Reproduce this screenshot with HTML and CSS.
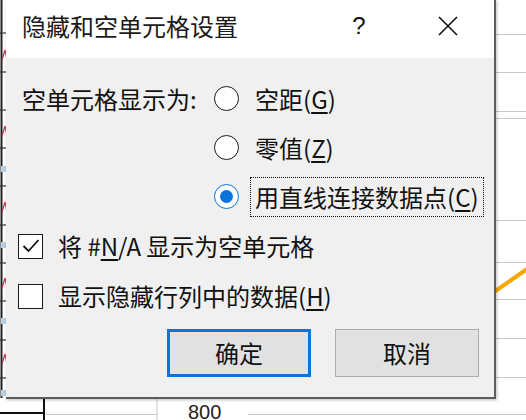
FILE: index.html
```html
<!DOCTYPE html>
<html lang="zh-CN">
<head>
<meta charset="utf-8">
<title>隐藏和空单元格设置</title>
<link rel="stylesheet" href="styles.css">
</head>
<body>
<div class="screen">
  <svg class="sheet" width="526" height="420" viewBox="0 0 526 420">
    <line x1="1.5" y1="0" x2="1.5" y2="398" stroke="#222" stroke-width="2"/>
    <g stroke="#333" stroke-width="1.2">
      <line x1="0" y1="33" x2="7" y2="33"/>
      <line x1="0" y1="72" x2="7" y2="72"/>
      <line x1="0" y1="110" x2="7" y2="110"/>
      <line x1="0" y1="148" x2="7" y2="148"/>
      <line x1="0" y1="186" x2="7" y2="186"/>
      <line x1="0" y1="225" x2="7" y2="225"/>
      <line x1="0" y1="263" x2="7" y2="263"/>
      <line x1="0" y1="301" x2="7" y2="301"/>
      <line x1="0" y1="340" x2="7" y2="340"/>
      <line x1="0" y1="378" x2="7" y2="378"/>
    </g>
    <g fill="none" stroke="#c0304a" stroke-width="1.2">
      <path d="M2 60 L5 50 L7 60"/>
      <path d="M2 136 L5 126 L7 136"/>
      <path d="M2 212 L5 202 L7 212"/>
      <path d="M2 288 L5 278 L7 288"/>
      <path d="M2 364 L5 354 L7 364"/>
    </g>
    <g fill="#b8cfe0">
      <rect x="1" y="166" width="5" height="6"/>
      <rect x="1" y="242" width="5" height="6"/>
      <rect x="1" y="318" width="5" height="6"/>
      <rect x="1" y="390" width="5" height="6"/>
    </g>
    <line x1="0" y1="413" x2="45" y2="413" stroke="#111" stroke-width="2"/>
    <line x1="44" y1="398" x2="44" y2="420" stroke="#111" stroke-width="2"/>
    <line x1="157" y1="398" x2="157" y2="420" stroke="#c8c8c8" stroke-width="1"/>
    <line x1="46" y1="414.5" x2="157" y2="414.5" stroke="#c8c8c8" stroke-width="1"/>
    <line x1="248" y1="414.5" x2="526" y2="414.5" stroke="#c8c8c8" stroke-width="1"/>
    <g stroke="#c8c8c8" stroke-width="1">
      <line x1="496" y1="34.5" x2="526" y2="34.5"/>
      <line x1="496" y1="72.5" x2="526" y2="72.5"/>
      <line x1="496" y1="111.5" x2="526" y2="111.5"/>
      <line x1="496" y1="118.5" x2="526" y2="118.5"/>
      <line x1="496" y1="220.5" x2="526" y2="220.5"/>
      <line x1="496" y1="262.5" x2="526" y2="262.5"/>
      <line x1="496" y1="299.5" x2="526" y2="299.5"/>
      <line x1="496" y1="338.5" x2="526" y2="338.5"/>
      <line x1="496" y1="377.5" x2="526" y2="377.5"/>
    </g>
    <line x1="494" y1="292" x2="527" y2="269" stroke="#f7a800" stroke-width="4"/>
  </svg>
  <div class="cell-800">800</div>

  <div class="dialog">
    <div class="titlebar">
      <span class="title">隐藏和空单元格设置</span>
      <span class="help">?</span>
      <span class="close">
        <svg width="20" height="20" viewBox="0 0 20 20"><path d="M1 1 L19 19 M19 1 L1 19" stroke="#111" stroke-width="1.6" fill="none"/></svg>
      </span>
    </div>
    <div class="body">
      <div class="group">
        <div class="group-label">空单元格显示为:</div>
        <div class="options">
          <div class="option"><span class="radio"></span><span class="opt-text">空距(<u>G</u>)</span></div>
          <div class="option"><span class="radio"></span><span class="opt-text">零值(<u>Z</u>)</span></div>
          <div class="option"><span class="radio checked"></span><span class="opt-text focused">用直线连接数据点(<u>C</u>)</span></div>
        </div>
      </div>
      <div class="check-row">
        <span class="checkbox"><svg width="22" height="22" viewBox="0 0 22 22"><path d="M3.5 11 L8.5 16 L18.5 5" stroke="#111" stroke-width="1.8" fill="none"/></svg></span>
        <span class="check-text">将 #<u>N</u>/A 显示为空单元格</span>
      </div>
      <div class="check-row">
        <span class="checkbox"></span>
        <span class="check-text">显示隐藏行列中的数据(<u>H</u>)</span>
      </div>
      <div class="buttons">
        <button class="btn btn-default">确定</button>
        <button class="btn">取消</button>
      </div>
    </div>
  </div>
</div>
</body>
</html>
```

FILE: styles.css
```css
* { box-sizing: border-box; }
html, body { margin: 0; padding: 0; background: #fff; }
body { font-family: "Noto Sans CJK SC", "Noto Sans", sans-serif; color: #111; }

.screen {
  position: relative;
  width: 526px;
  height: 420px;
  overflow: hidden;
  background: #fff;
}
.sheet { position: absolute; left: 0; top: 0; }
.cell-800 {
  position: absolute;
  left: 188px;
  top: 402px;
  font-family: "Liberation Sans", sans-serif;
  font-size: 20px;
  line-height: 20px;
  color: #222;
}

.dialog {
  position: absolute;
  left: 6px;
  top: 0;
  width: 490px;
  height: 399px;
  display: flex;
  flex-direction: column;
  background: #f0f0f0;
  border-right: 2px solid #5c5c5c;
  border-bottom: 2px solid #5c5c5c;
  box-shadow: 1px 1px 3px rgba(0,0,0,0.25);
}

.titlebar {
  height: 58px;
  flex: none;
  background: #fff;
  display: flex;
  align-items: center;
  padding: 0 26px 6px 16px;
}
.title { flex: 1; font-size: 24px; line-height: 30px; color: #1a1a1a; }
.help { width: 34px; text-align: center; font-size: 24px; line-height: 30px; font-family: "Liberation Sans", sans-serif; }
.close { width: 40px; margin-left: 52px; display: flex; justify-content: center; align-items: center; height: 30px; }

.body {
  flex: 1;
  display: flex;
  flex-direction: column;
  padding: 16px 15px 0 12px;
  font-size: 24px;
  white-space: nowrap;
}

.group { display: flex; }
.group-label { width: 196px; flex: none; padding-left: 4px; line-height: 49px; height: 49px; }
.options { display: flex; flex-direction: column; flex: 1; }
.option { height: 49px; display: flex; align-items: center; }

.radio {
  width: 25px;
  height: 25px;
  border: 1.6px solid #1a1a1a;
  border-radius: 50%;
  background: #fff;
  margin-right: 11px;
  display: flex;
  align-items: center;
  justify-content: center;
  flex: none;
}
.radio.checked { border-color: #0a74da; }
.radio.checked::after {
  content: "";
  width: 13px;
  height: 13px;
  border-radius: 50%;
  background: #0a74da;
}

.opt-text {
  border: 1px dotted transparent;
  padding: 0 4px;
  line-height: 38px;
  height: 40px;
}
.opt-text.focused { border-color: #111; }

u { text-decoration: underline; text-decoration-thickness: 1.5px; text-underline-offset: 3px; }

.check-row { height: 50px; display: flex; align-items: center; }
.checkbox {
  width: 25px;
  height: 25px;
  border: 1.6px solid #1a1a1a;
  background: #fff;
  margin-right: 15px;
  display: flex;
  align-items: center;
  justify-content: center;
  flex: none;
}
.check-text { line-height: 30px; }

.buttons {
  margin-top: 8px;
  display: flex;
  justify-content: flex-end;
  gap: 24px;
}
.btn {
  width: 144px;
  height: 48px;
  background: #e1e1e1;
  border: 1.5px solid #adadad;
  font-family: "Noto Sans CJK SC", sans-serif;
  font-size: 24px;
  color: #111;
  padding: 0;
  line-height: 1;
}
.btn-default { border: 3px solid #0a74da; }
```
